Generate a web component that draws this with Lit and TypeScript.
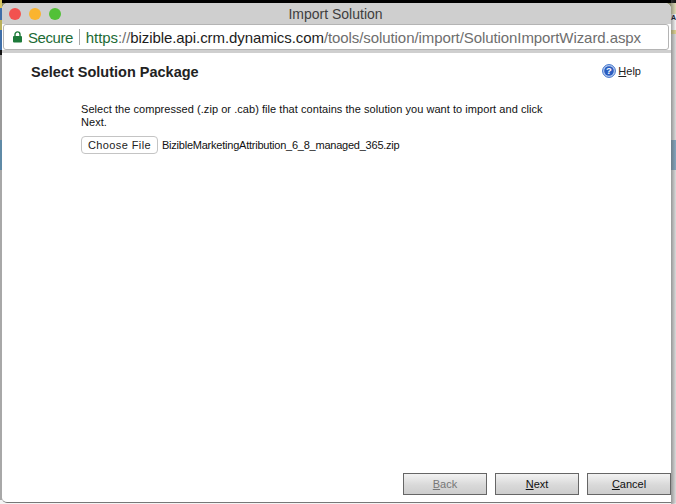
import { LitElement, html, css } from "lit";
import { customElement } from "lit/decorators.js";

@customElement("app-root")
export class AppRoot extends LitElement {
  static styles = css`
    :host {
      display: block;
      width: 676px;
      height: 504px;
      overflow: hidden;
      font-family: "Liberation Sans", Arial, sans-serif;
      background: linear-gradient(#000 0 3px, #8f8f70 3px 10px, #f4f4f4 10px);
    }
    .desk { display: flex; height: 504px; }
    .left { width: 2px; flex: none; background: linear-gradient(#d8c860 0 8px, #3f6ea8 8px 20px, #b9b05a 20px 30px, #3f6ea8 30px 50px, #111 50px 55px, #9a9a9a 55px 140px, #5f8aa6 140px 170px, #a8a8a8 170px 500px, #f4f4f4 500px); }
    .right { flex: 1; position: relative; background: linear-gradient(to right, rgba(90,90,90,.55), rgba(150,150,150,.1)), linear-gradient(#000 0 3px, #e9e3b8 3px 14px, #fff 14px 30px, #e6d98c 30px 34px, #e2e2e2 34px 140px, #7fa6c2 140px 170px, #e2e2e2 170px 503px, #f4f4f4 503px); }
    .edge-a { position: absolute; left: 0; top: 12px; font-size: 7px; line-height: 11px; font-weight: 700; color: #223; }
    .window { width: 669px; flex: none; margin-top: 3px; height: 500px; box-sizing: border-box; display: flex; flex-direction: column; background: #fff; border-radius: 6px 6px 0 5px; overflow: hidden; border-bottom: 1px solid #777; position: relative; }
    .title { height: 21px; flex: none; background: #cfcfcf; display: flex; align-items: center; position: relative; padding-left: 7px; gap: 8px; }
    .dot { width: 12px; height: 12px; border-radius: 50%; }
    .red { background: #f2524f; } .yellow { background: #fab42f; } .green { background: #52c137; }
    .caption { position: absolute; left: -2px; right: 0; top: 3px; text-align: center; font-size: 14px; color: #3e3e3e; line-height: 16px; }
    .bar { height: 26px; flex: none; background: #fff; margin: 0 2px 0 1px; border: 1px solid #b4b4b4; border-radius: 3px; display: flex; align-items: center; padding-left: 9px; font-size: 15px; letter-spacing: -0.08px; white-space: nowrap; box-sizing: border-box; }
    .strip { height: 3px; flex: none; background: #cfcfcf; }
    .lock { margin-right: 6px; display: block; }
    .sec { color: #1d6b35; letter-spacing: -0.45px; }
    .sep { width: 1px; height: 16px; background: #a9a9a9; margin: 0 6px 0 6px; }
    .https { color: #1d6b35; } .dim { color: #6e6e6e; } .host { color: #1c1c1c; }
    .page { flex: 1; display: flex; flex-direction: column; min-height: 0; }
    .head { display: flex; justify-content: space-between; padding: 10px 30px 0 29px; height: 34px; box-sizing: border-box; }
    h1 { margin: 0; font-size: 14.5px; font-weight: 700; color: #222; line-height: 18px; }
    .help { display: flex; align-items: center; gap: 2px; font-size: 11px; color: #222; height: 16px; }
    u { text-decoration: underline; }
    .body { flex: 1; padding: 16px 0 0 79px; font-size: 11px; color: #111; line-height: 13px; }
    .body p { margin: 0; width: 470px; letter-spacing: 0.05px; }
    .file { display: flex; align-items: center; margin-top: 7px; gap: 4px; }
    .fname { letter-spacing: -0.23px; }
    .choose { width: 77px; height: 18px; box-sizing: border-box; border: 1px solid #c4c4c4; border-radius: 4px; background: #fff; font-family: inherit; font-size: 11px; letter-spacing: .4px; color: #222; padding: 0; }
    .foot { display: flex; justify-content: flex-end; gap: 8px; padding: 0 0 7px; }
    .btn { width: 84px; height: 22px; box-sizing: border-box; border: 1px solid #666; background: linear-gradient(#f2f2f2, #d9d9d9 55%, #cdcdcd); font-family: inherit; font-size: 11px; color: #111; padding: 0; }
    .btn[disabled] { color: #777; }
  `;

  render() {
    return html`<div class="desk">
      <div class="left"></div>
      <div class="window">
        <div class="title">
          <span class="dot red"></span><span class="dot yellow"></span><span class="dot green"></span>
          <span class="caption">Import Solution</span>
        </div>
        <div class="bar">
          <svg class="lock" width="9" height="12" viewBox="0 0 9 12"><path d="M2 5V3.4a2.5 2.5 0 0 1 5 0V5" fill="none" stroke="#1d7a3a" stroke-width="1.4"/><rect x="0" y="5" width="9" height="6.5" rx="1" fill="#1d7a3a"/></svg>
          <span class="sec">Secure</span><span class="sep"></span>
          <span><span class="https">https</span><span class="dim">://</span><span class="host">bizible.api.crm.dynamics.com</span><span class="dim">/tools/solution/import/SolutionImportWizard.aspx</span></span>
        </div>
        <div class="strip"></div>
        <div class="page">
          <div class="head">
            <h1>Select Solution Package</h1>
            <span class="help">
              <svg width="14" height="14" viewBox="0 0 14 14"><circle cx="7" cy="7" r="6.4" fill="#bcd0f0" stroke="#3b6fc9" stroke-width="1"/><circle cx="7" cy="7" r="4.8" fill="#2a5cc0"/><text x="7" y="10.3" text-anchor="middle" font-size="9.5" font-weight="700" fill="#fff" font-family="Liberation Sans">?</text></svg>
              <span><u>H</u>elp</span>
            </span>
          </div>
          <div class="body">
            <p>Select the compressed (.zip or .cab) file that contains the solution you want to import and click Next.</p>
            <div class="file"><button class="choose">Choose File</button><span class="fname">BizibleMarketingAttribution_6_8_managed_365.zip</span></div>
          </div>
          <div class="foot">
            <button class="btn" disabled><u>B</u>ack</button>
            <button class="btn"><u>N</u>ext</button>
            <button class="btn"><u>C</u>ancel</button>
          </div>
        </div>
      </div>
      <div class="right"><span class="edge-a">A</span></div>
    </div>`;
  }
}
